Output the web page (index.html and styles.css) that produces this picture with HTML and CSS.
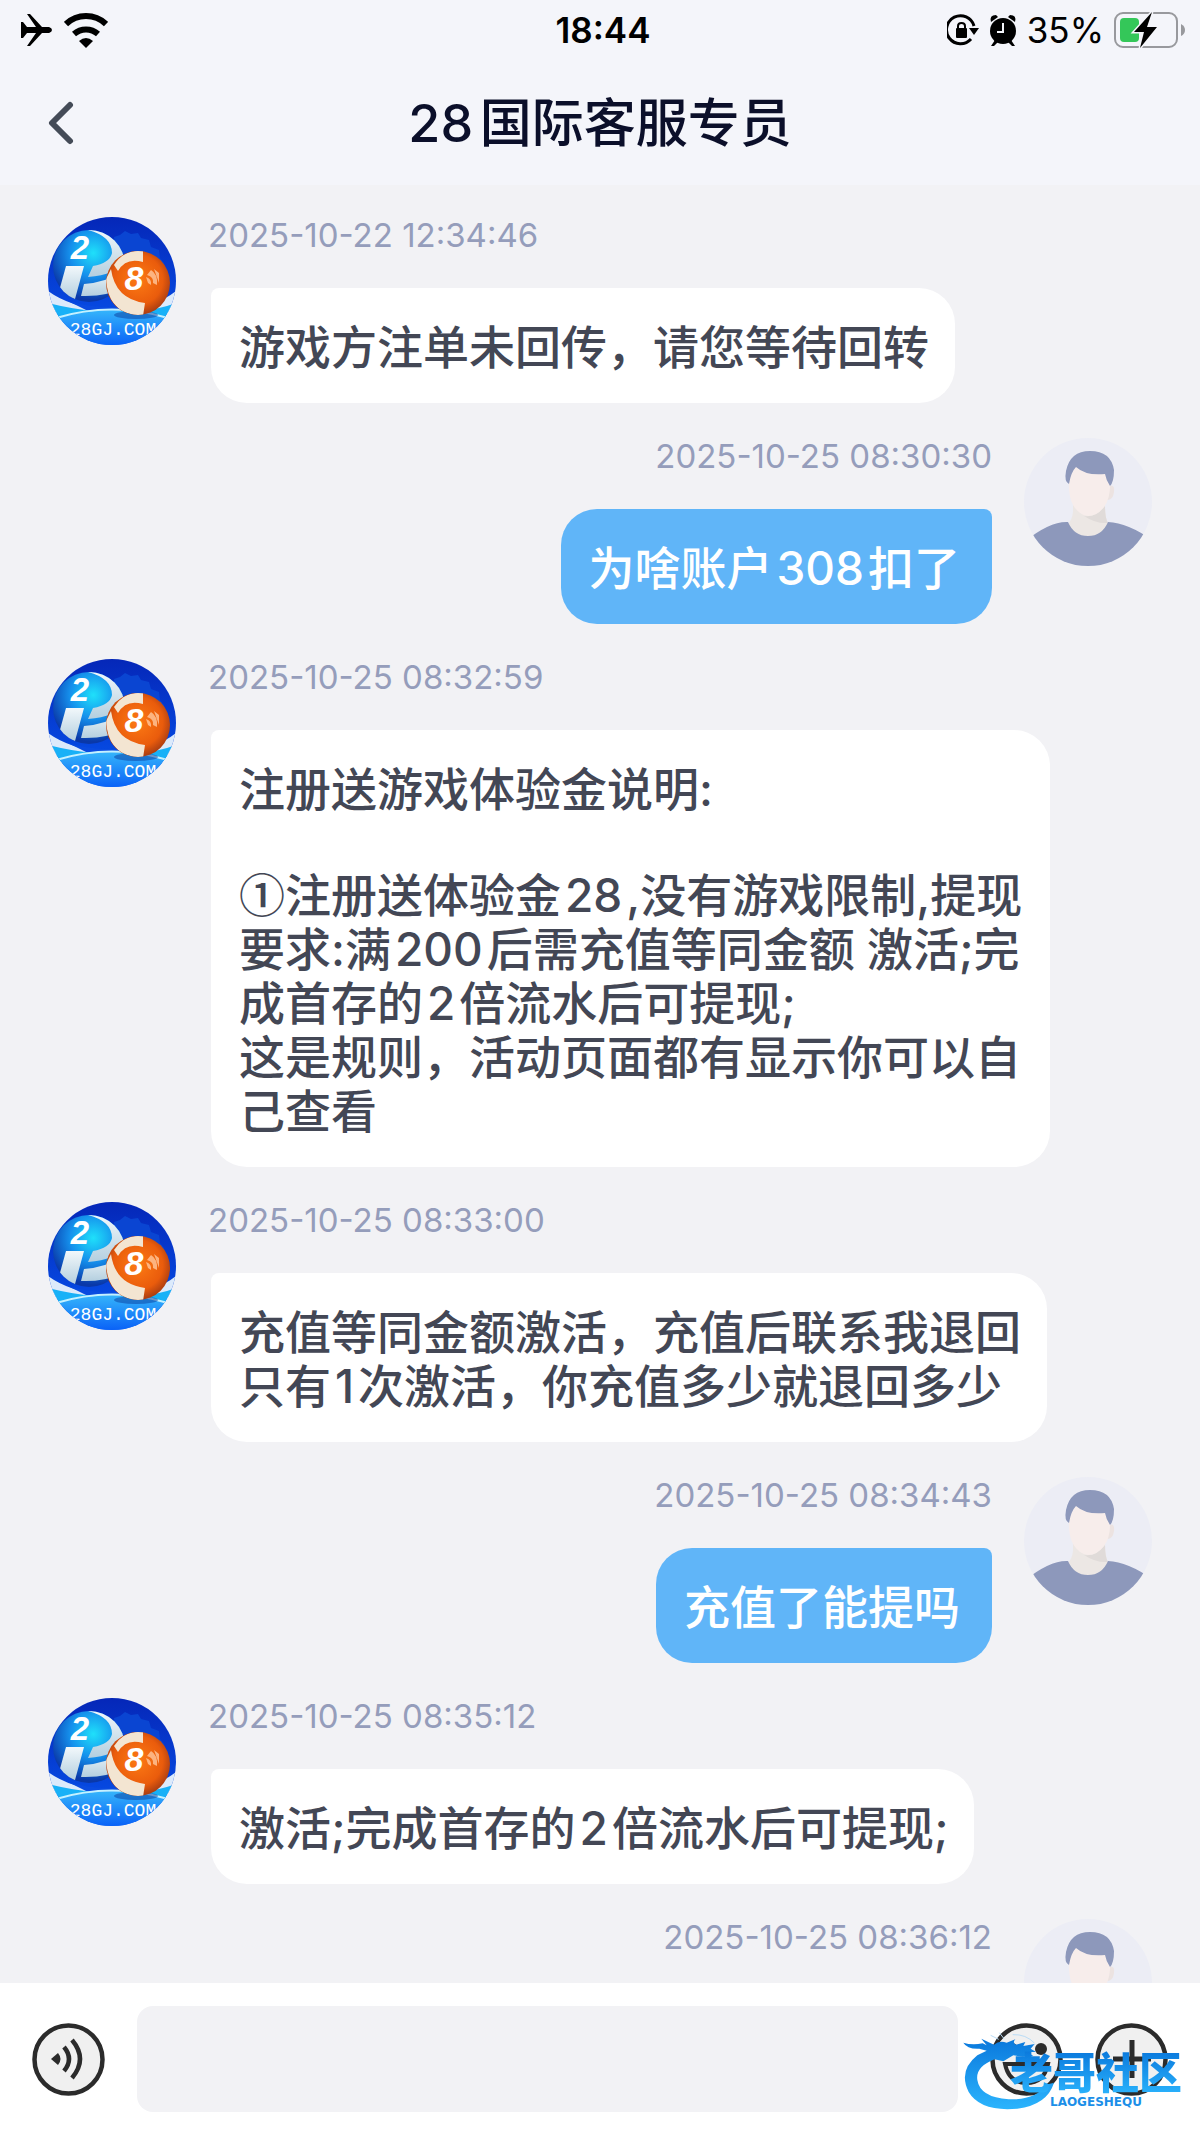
FILE: index.html
```html
<!DOCTYPE html>
<html lang="zh-CN">
<head>
    <meta charset="UTF-8">
    <meta name="viewport" content="width=device-width, initial-scale=1.0">
    <title>28国际客服专员</title>
    <link rel="stylesheet" href="styles.css">
</head>
<body>
    <!-- 头像图形 -->
    <svg class="sprites" aria-hidden="true">
        <defs>
            <linearGradient id="sky" x1="0" y1="0" x2="0" y2="1">
                <stop offset="0" stop-color="#0527b8"/>
                <stop offset="0.7" stop-color="#0648e0"/>
                <stop offset="1" stop-color="#1d6cf5"/>
            </linearGradient>
            <linearGradient id="stage" x1="0" y1="0" x2="0" y2="1">
                <stop offset="0" stop-color="#35b5fb"/>
                <stop offset="1" stop-color="#0a62f7"/>
            </linearGradient>
            <radialGradient id="blueBall" cx="0.56" cy="0.32" r="0.65">
                <stop offset="0" stop-color="#1fe0fa"/>
                <stop offset="0.5" stop-color="#1590ec"/>
                <stop offset="1" stop-color="#0a38a8"/>
            </radialGradient>
            <linearGradient id="silver" x1="0" y1="0" x2="0" y2="1">
                <stop offset="0" stop-color="#f2f8fb"/>
                <stop offset="1" stop-color="#b4cfdf"/>
            </linearGradient>
            <radialGradient id="orangeBall" cx="0.5" cy="0.45" r="0.55">
                <stop offset="0" stop-color="#fc7a14"/>
                <stop offset="0.7" stop-color="#ea5c0c"/>
                <stop offset="1" stop-color="#a83c12"/>
            </radialGradient>
            <clipPath id="round"><circle cx="64" cy="64" r="64"/></clipPath>
            <clipPath id="ballA"><circle cx="41" cy="49" r="36"/></clipPath>
            <clipPath id="ballB"><circle cx="90" cy="66" r="32"/></clipPath>
        </defs>
        <symbol id="agent" viewBox="0 0 128 128">
            <g clip-path="url(#round)">
                <rect width="128" height="128" fill="url(#sky)"/>
                <path d="M66 20l6-2 5-4 6 3 7-1 3 5 8 2 2 7 8 3 1 8 4 5v20H70z" fill="#0a45d2"/>
                <path d="M0 74Q22 90 60 94H72Q108 90 128 74V96H0z" fill="#dceafb"/>
                <path d="M20 84Q60 96 108 84L100 94H40z" fill="#0a4be0"/>
                <path d="M0 86Q24 92 46 94Q20 98 8 106L0 100zM128 86Q112 92 92 94Q112 98 120 106L128 98z" fill="#18b1f7"/>
                <path d="M0 104Q64 82 128 104V128H0z" fill="url(#stage)"/>
                <path d="M8 101Q64 84 120 101" fill="none" stroke="#c4f1ff" stroke-width="2"/>
                <ellipse cx="88" cy="98" rx="22" ry="4" fill="#0a3c9c" opacity="0.5"/>
                <circle cx="41" cy="49" r="36" fill="url(#blueBall)"/>
                <g clip-path="url(#ballA)" fill="url(#silver)">
                    <path d="M18 49H36L27 82L10 78z"/>
                    <path d="M36 12Q64 18 64 36Q62 46 45 49L40 60Q70 58 78 42Q80 10 36 12z"/>
                    <path d="M36 67Q58 66 80 52V68Q62 80 33 79z"/>
                </g>
                <circle cx="90" cy="66" r="32" fill="url(#orangeBall)"/>
                <g clip-path="url(#ballB)" fill="#f3e5d2">
                    <path d="M66 48Q76 32 95 34V45Q78 40 70 54z"/>
                    <path d="M58 62L63 52Q67 82 97 86L95 99Q60 98 58 62z"/>
                </g>
                <path d="M103 53Q110 57 109 68L105 66Q106 60 99 58zM98 60Q104 62 103 68L100 66zM106 52L111 56V66Z" fill="#ffc79c" opacity="0.8"/>
                <text class="ball-number" x="32" y="42" font-size="33">2</text>
                <text class="ball-number" x="86" y="73" font-size="34">8</text>
                <text class="ball-site" x="65" y="118" font-size="18">28GJ.COM</text>
            </g>
        </symbol>
        <symbol id="user" viewBox="0 0 128 128">
            <g clip-path="url(#round)">
                <rect width="128" height="128" fill="#ecedf5"/>
                <path d="M85 48Q91 46 90 54Q89 62 83 62z" fill="#ece3e1"/>
                <path d="M49 66V74Q48 82 44 86Q48 100 64 100Q80 100 84 86Q81 80 81 66z" fill="#ece7e4"/>
                <path d="M60 78Q72 80 81 68Q81 80 84 85Q72 86 60 78z" fill="#e0dbd9"/>
                <path d="M45 40Q45 24 64 24Q86 24 86 42Q87 60 80 69Q73 78 64 78Q55 77 49 67Q44 58 45 40z" fill="#f7edeb"/>
                <path d="M45 46Q40 44 42 33Q46 13 66 13Q87 13 90 32Q90 44 86 48Q82 42 81 36Q62 38 52 29Q47 34 45 46z" fill="#8d98bb"/>
                <path d="M0 104Q26 83 44 84Q50 98 64 98Q78 98 84 84Q104 85 128 102V128H0z" fill="#8d98bb"/>
            </g>
        </symbol>
    </svg>

    <header class="header">
        <div class="status-bar">
            <div class="status-left">
                <svg width="32" height="32" viewBox="0 0 32 32">
                    <path d="M1 8h2l4 5h9L7 0h3l12 13h7q3 1 3 3t-3 3h-7L10 32H7l9-13H7l-4 5H1z"/>
                </svg>
                <svg width="44" height="36" viewBox="0 0 44 36">
                    <path d="M2 12A29 29 0 0 1 42 12" fill="none" stroke="#000" stroke-width="6"/>
                    <path d="M10 22A18 18 0 0 1 34 22" fill="none" stroke="#000" stroke-width="6"/>
                    <path d="M22 36L15 29Q22 23 29 29z"/>
                </svg>
            </div>
            <time class="clock">18:44</time>
            <div class="status-right">
                <svg width="32" height="32" viewBox="0 0 32 32">
                    <path d="M24 25A14 14 0 1 1 27 12" fill="none" stroke="#000" stroke-width="3"/>
                    <path d="M22 14h10l-5 7z"/>
                    <rect x="9" y="14" width="11" height="10" rx="1"/>
                    <path d="M11 15v-3q0-3 3.500-3t3.500 3v3" fill="none" stroke="#000" stroke-width="2"/>
                </svg>
                <svg width="28" height="32" viewBox="0 0 28 32">
                    <circle cx="14" cy="17" r="13"/>
                    <path d="M2 8Q0 1 7 1L9 3zM26 8Q28 1 21 1L19 3zM6 26l-4 6h3l4-4zM22 26l4 6h-3l-4-4z"/>
                    <path d="M14 9v9H8" fill="none" stroke="#f4f5fa" stroke-width="2"/>
                </svg>
                <span>35%</span>
                <svg width="72" height="36" viewBox="0 0 72 36">
                    <rect x="1" y="1" width="62" height="34" rx="8" fill="none" stroke="#98999d" stroke-width="2"/>
                    <path d="M67 12q4 2 4 6t-4 6z" fill="#98999d"/>
                    <rect x="6" y="6" width="19" height="24" rx="4" fill="#34c759"/>
                    <path d="M38 0L20 20h10l-4 16L43 15H33z" stroke="#f4f5fa" stroke-width="3" paint-order="stroke"/>
                </svg>
            </div>
        </div>
        <div class="title-bar">
            <button class="back" aria-label="返回">
                <svg width="26" height="44" viewBox="0 0 26 44">
                    <path d="M22 4L4 22L22 40" fill="none" stroke="#444b57" stroke-width="6" stroke-linecap="round" stroke-linejoin="round"/>
                </svg>
            </button>
            <h1>28国际客服专员</h1>
        </div>
    </header>

    <main class="chat">
        <div class="message">
            <svg class="avatar"><use href="#agent"/></svg>
            <div class="content">
                <time>2025-10-22 12:34:46</time>
                <div class="bubble"><p>游戏方注单未回传，请您等待回转</p></div>
            </div>
        </div>

        <div class="message mine">
            <svg class="avatar"><use href="#user"/></svg>
            <div class="content">
                <time>2025-10-25 08:30:30</time>
                <div class="bubble"><p>为啥账户<span class="num">308</span>扣了</p></div>
            </div>
        </div>

        <div class="message">
            <svg class="avatar"><use href="#agent"/></svg>
            <div class="content">
                <time>2025-10-25 08:32:59</time>
                <div class="bubble">
                    <p>注册送游戏体验金说明:</p>
                    <p><span class="circled">①</span>注册送体验金<span class="num">28</span>,没有游戏限制,提现要求:满<span class="num">200</span>后需充值等同金额 激活;完成首存的<span class="num">2</span>倍流水后可提现;<br>这是规则，活动页面都有显示你可以自己查看</p>
                </div>
            </div>
        </div>

        <div class="message">
            <svg class="avatar"><use href="#agent"/></svg>
            <div class="content">
                <time>2025-10-25 08:33:00</time>
                <div class="bubble"><p>充值等同金额激活，充值后联系我退回<br>只有<span class="num">1</span>次激活，你充值多少就退回多少</p></div>
            </div>
        </div>

        <div class="message mine">
            <svg class="avatar"><use href="#user"/></svg>
            <div class="content">
                <time>2025-10-25 08:34:43</time>
                <div class="bubble"><p>充值了能提吗</p></div>
            </div>
        </div>

        <div class="message">
            <svg class="avatar"><use href="#agent"/></svg>
            <div class="content">
                <time>2025-10-25 08:35:12</time>
                <div class="bubble"><p>激活;完成首存的<span class="num">2</span>倍流水后可提现;</p></div>
            </div>
        </div>

        <div class="message mine">
            <svg class="avatar"><use href="#user"/></svg>
            <div class="content">
                <time>2025-10-25 08:36:12</time>
            </div>
        </div>
    </main>

    <footer class="toolbar">
        <button class="tool" aria-label="语音">
            <svg width="73" height="73" viewBox="0 0 73 73">
                <circle cx="36.500" cy="36.500" r="34" fill="#f0f0f0" stroke="#2b2b2b" stroke-width="4.500"/>
                <path d="M19 36l7-6q5 6 0 12z" fill="#2b2b2b"/>
                <path d="M32 24q10 12 0 24M40 17q16 19 0 38" fill="none" stroke="#2b2b2b" stroke-width="4.500"/>
            </svg>
        </button>
        <input class="message-input" type="text" aria-label="输入消息">
        <button class="tool" aria-label="表情">
            <svg width="73" height="73" viewBox="0 0 73 73">
                <circle cx="36.500" cy="36.500" r="34" fill="#f0f0f0" stroke="#2b2b2b" stroke-width="4.500"/>
                <circle cx="22" cy="26" r="6" fill="#2b2b2b"/>
                <circle cx="51" cy="26" r="6" fill="#2b2b2b"/>
                <path d="M15 41H58Q54 60 36.500 60T15 41z" fill="#f0f0f0" stroke="#2b2b2b" stroke-width="4"/>
            </svg>
        </button>
        <button class="tool" aria-label="更多">
            <svg width="73" height="73" viewBox="0 0 73 73">
                <circle cx="36.500" cy="36.500" r="34" fill="#f0f0f0" stroke="#2b2b2b" stroke-width="4.500"/>
                <path d="M37 17V55M18 36H56" stroke="#2b2b2b" stroke-width="5"/>
            </svg>
        </button>

        <div class="watermark">
            <svg width="94" height="78" viewBox="0 0 282 234">
                <defs>
                    <linearGradient id="dragon" x1="0" y1="0" x2="0" y2="1">
                        <stop offset="0" stop-color="#0a78dc"/>
                        <stop offset="1" stop-color="#2bb4fd"/>
                    </linearGradient>
                </defs>
                <path d="M4 32Q30 40 62 34L74 40L58 20L96 38Q112 24 134 32L160 22Q150 32 162 38L190 30L184 42L218 36L206 50L222 60L196 60L214 72L182 74L154 70L124 88L98 82Q40 104 46 144Q54 196 140 202Q222 204 252 158L276 152Q256 218 166 230Q56 240 20 180Q-12 116 46 70L74 56L52 50Q16 52 4 32z" fill="url(#dragon)"/>
                <path d="M86 10l24 12M112 2l14 18M152 8q40-2 66 26" fill="none" stroke="#b9dcf6" stroke-width="3"/>
            </svg>
            <div class="watermark-text">
                <strong>老哥社区</strong>
                <small>LAOGESHEQU</small>
            </div>
        </div>
    </footer>
</body>
</html>
```
FILE: styles.css
```css
* {
    box-sizing: border-box;
}

body {
    font-family: Inter, 'Noto Sans CJK SC', sans-serif;
    margin: 0;
    height: 100vh;
    display: flex;
    flex-direction: column;
    background: #f2f2f5;
    color: #434755;
}

button {
    padding: 0;
    border: none;
    background: none;
    cursor: pointer;
}

svg {
    display: block;
    flex-shrink: 0;
}

.sprites {
    position: absolute;
    width: 0;
    height: 0;
}

.header {
    background: #f4f5fa;
}

.status-bar {
    display: grid;
    grid-template-columns: 1fr auto 1fr;
    align-items: center;
    height: 60px;
    padding: 0 14px 0 20px;
    color: #000;
    font-size: 35px;
}

.status-left,
.status-right {
    display: flex;
    align-items: center;
    gap: 12px;
}

.status-right {
    justify-content: flex-end;
    gap: 10px;
}

.clock {
    font-weight: 600;
}

.title-bar {
    display: grid;
    grid-template-columns: 48px 1fr 48px;
    align-items: center;
    height: 125px;
    padding: 0 48px;
}

.title-bar h1 {
    margin: 0;
    padding-bottom: 6px;
    color: #0b0f2a;
    font-size: 52px;
    font-weight: 500;
    text-align: center;
    text-autospace: normal;
}

.chat {
    flex: 1;
    min-height: 0;
    overflow: hidden;
    display: flex;
    flex-direction: column;
    gap: 35px;
    padding: 32px 48px 0;
}

.message {
    display: flex;
    flex-shrink: 0;
    gap: 32px;
}

.message.mine {
    flex-direction: row-reverse;
}

.avatar {
    width: 128px;
    height: 128px;
}

.ball-number {
    fill: #fff;
    font-family: 'Liberation Sans', sans-serif;
    font-weight: bold;
    font-style: italic;
    text-anchor: middle;
}

.ball-site {
    fill: #fff;
    font-family: 'Liberation Mono', monospace;
    text-anchor: middle;
}

.content {
    display: flex;
    flex: 1;
    flex-direction: column;
    align-items: flex-start;
    margin-right: 102px;
}

.mine .content {
    align-items: flex-end;
    margin: 0 0 0 102px;
}

.content time {
    margin-bottom: 35px;
    color: #959dbb;
    font-size: 33px;
    line-height: 36px;
}

.bubble {
    margin-left: 3px;
    padding: 32px 26px 29px 28px;
    border-radius: 8px 36px 36px 36px;
    background: #fff;
    font-size: 46px;
    font-weight: 500;
    line-height: 54px;
}

.mine .bubble {
    margin-left: 0;
    padding-right: 32px;
    border-radius: 36px 8px 36px 36px;
    background: #60b5f8;
    color: #fff;
}

.bubble p {
    margin: 0;
}

.bubble p + p {
    margin-top: 52px;
}

.num {
    margin: 0 4px;
}

.circled {
    font-family: 'Noto Sans CJK SC', sans-serif;
    line-height: 1;
}

.toolbar {
    position: relative;
    display: flex;
    align-items: center;
    gap: 32px;
    padding: 23px 32px 22px;
    background: #fff;
}

.message-input {
    flex: 1;
    min-width: 0;
    height: 106px;
    padding: 0 28px;
    border: none;
    border-radius: 16px;
    background: #f2f2f5;
    font: inherit;
    font-size: 46px;
}

/* 水印盖在工具栏上 */
.watermark {
    position: absolute;
    right: 18px;
    bottom: 24px;
    display: flex;
    pointer-events: none;
}

.watermark-text {
    display: flex;
    flex-direction: column;
    align-items: center;
    margin: 18px 0 0 -46px;
}

.watermark strong {
    background: linear-gradient(#0a78dc, #2bb4fd);
    background-clip: text;
    color: transparent;
    font-size: 43px;
    font-weight: 900;
    line-height: 46px;
}

.watermark small {
    color: #1c8fe8;
    font-family: 'DejaVu Sans', sans-serif;
    font-size: 12px;
    font-weight: bold;
    line-height: 12px;
}
```
